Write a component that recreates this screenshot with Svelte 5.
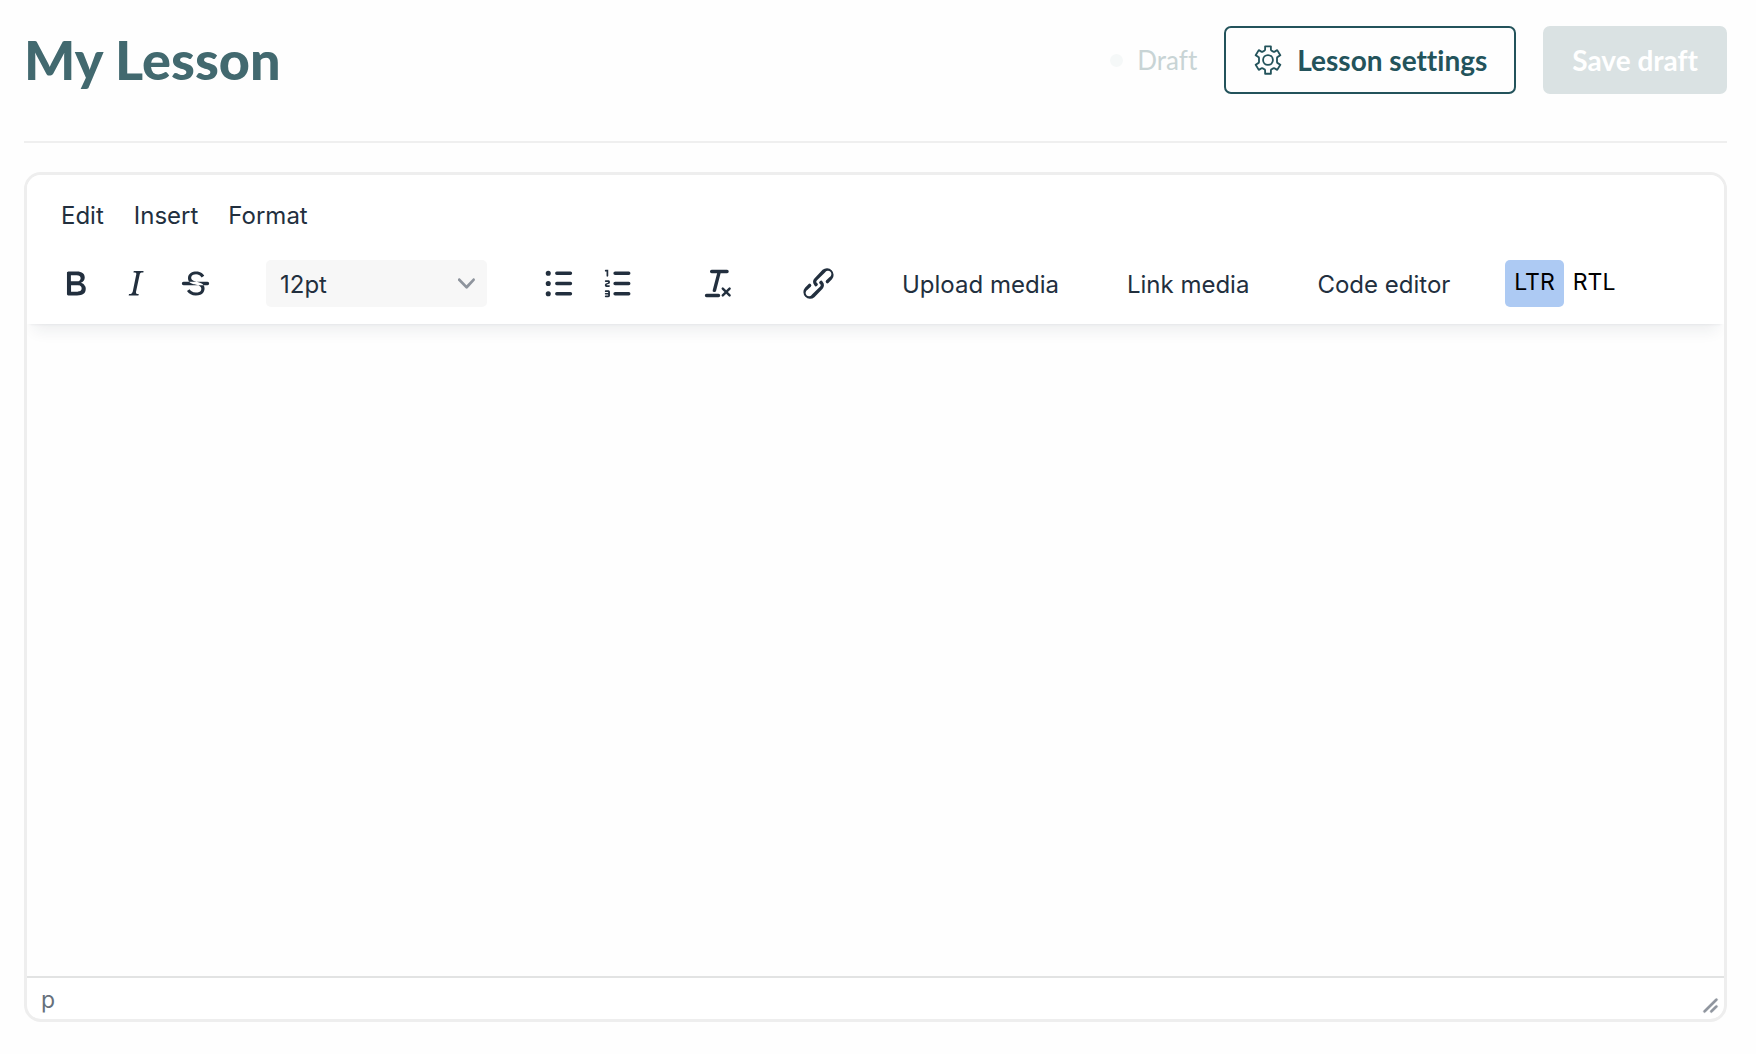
<script lang="ts">
	let fontSize = $state('12pt');
	let direction = $state('ltr');
	let content = $state('');

	const menus = ['Edit', 'Insert', 'Format'];
	const fontSizes = ['8pt', '10pt', '12pt', '14pt', '18pt', '24pt', '36pt'];

	const styleButtons = [
		{
			name: 'Bold',
			path: 'M7.8 19c-.3 0-.5 0-.6-.2l-.2-.5V5.7c0-.2 0-.4.2-.5l.6-.2h5c1.5 0 2.7.3 3.5 1 .7.6 1.1 1.4 1.1 2.5a3 3 0 0 1-.6 1.9c-.4.6-1 1-1.6 1.2.4.1.9.3 1.3.6s.8.7 1 1.2c.4.4.5 1 .5 1.6 0 1.3-.4 2.3-1.3 3-.8.7-2.1 1-3.8 1H7.8Zm5-8.3c.6 0 1.2-.1 1.6-.5.4-.3.6-.7.6-1.3 0-1.1-.8-1.7-2.3-1.7H9.3v3.5h3.4Zm.5 6c.7 0 1.3-.1 1.7-.4.4-.4.6-.9.6-1.5s-.2-1-.7-1.4c-.4-.3-1-.4-2-.4H9.4v3.8h4Z'
		},
		{
			name: 'Italic',
			path: 'm16.7 4.7-.1.9h-.3c-.6 0-1 0-1.4.3-.3.3-.4.6-.5 1.1l-2.1 9.8v.6c0 .5.4.8 1.4.8h.2l-.2.8H8l.2-.8h.2c1.1 0 1.8-.5 2-1.5l2-9.8.1-.5c0-.6-.4-.8-1.4-.8h-.3l.2-.9h5.8Z'
		},
		{
			name: 'Strikethrough',
			path: 'M15.6 8.5c-.5-.7-1-1.1-1.3-1.3-.6-.4-1.3-.6-2-.6-2.7 0-2.8 1.7-2.8 2.1 0 1.6 1.8 2 3.2 2.3 4.4.9 4.6 2.8 4.6 3.9 0 1.4-.7 4.1-5 4.1A6.2 6.2 0 0 1 7 16.4l1.5-1.1c.4.6 1.6 2 3.7 2 1.6 0 2.5-.4 3-1.2.4-.8.3-2-.8-2.6-.7-.4-1.6-.7-2.9-1-1-.2-3.9-.8-3.9-3.6C7.6 6 10.3 5 12.4 5c2.9 0 4.2 1.6 4.7 2.4l-1.5 1.1ZM5 11h14a1 1 0 0 1 0 2H5a1 1 0 0 1 0-2Z'
		}
	];

	const listButtons = [
		{
			name: 'Bullet list',
			path: 'M11 5h8a1 1 0 0 1 0 2h-8a1 1 0 0 1 0-2Zm0 6h8a1 1 0 0 1 0 2h-8a1 1 0 0 1 0-2Zm0 6h8a1 1 0 0 1 0 2h-8a1 1 0 0 1 0-2ZM6 4.5a1.5 1.5 0 1 1 0 3 1.5 1.5 0 0 1 0-3Zm0 6a1.5 1.5 0 1 1 0 3 1.5 1.5 0 0 1 0-3Zm0 6a1.5 1.5 0 1 1 0 3 1.5 1.5 0 0 1 0-3Z'
		},
		{
			name: 'Numbered list',
			path: 'M10 17h8a1 1 0 0 1 0 2h-8a1 1 0 0 1 0-2Zm0-6h8a1 1 0 0 1 0 2h-8a1 1 0 0 1 0-2Zm0-6h8a1 1 0 0 1 0 2h-8a1 1 0 1 1 0-2ZM6 4v3.5c0 .3-.2.5-.5.5a.5.5 0 0 1-.5-.5V5h-.5a.5.5 0 0 1 0-1H6Zm-1 8.8.2.2h1.3c.3 0 .5.2.5.5s-.2.5-.5.5H4.9a1 1 0 0 1-.9-1V13c0-.4.3-.8.6-1l1.2-.4.2-.3a.2.2 0 0 0-.2-.2H4.5a.5.5 0 0 1-.5-.5c0-.3.2-.5.5-.5h1.6c.5 0 .9.4.9 1v.1c0 .4-.3.8-.6 1l-1.2.4-.2.3ZM7 17v2c0 .6-.4 1-1 1H4.5a.5.5 0 0 1 0-1h1.2c.2 0 .3-.1.3-.3 0-.2-.1-.3-.3-.3H4.4a.4.4 0 1 1 0-.8h1.3c.2 0 .3-.1.3-.3 0-.2-.1-.3-.3-.3H4.5a.5.5 0 1 1 0-1H6c.6 0 1 .4 1 1Z'
		}
	];

	const clearButtons = [
		{
			name: 'Clear formatting',
			path: 'M13.2 6a1 1 0 0 1 0 .2l-2.6 10a1 1 0 0 1-1 .8h-.2a.8.8 0 0 1-.8-1l2.6-10H8a1 1 0 1 1 0-2h9a1 1 0 0 1 0 2h-3.8ZM5 18h7a1 1 0 0 1 0 2H5a1 1 0 0 1 0-2Zm13 1.5L16.5 18 15 19.5a.7.7 0 0 1-1-1l1.5-1.5-1.5-1.5a.7.7 0 0 1 1-1l1.5 1.5 1.5-1.5a.7.7 0 0 1 1 1L17.5 17l1.5 1.5a.7.7 0 0 1-1 1Z'
		}
	];

	const linkButtons = [
		{
			name: 'Insert link',
			path: 'M6.2 12.3a1 1 0 0 1 1.4 1.4l-2 2a2 2 0 1 0 2.6 2.8l4.8-4.8a1 1 0 0 0 0-1.4 1 1 0 1 1 1.4-1.3 2.9 2.9 0 0 1 0 4L9.6 20a3.9 3.9 0 0 1-5.5-5.5l2-2Zm11.6-.6a1 1 0 0 1-1.4-1.4l2-2a2 2 0 1 0-2.6-2.8L11 10.3a1 1 0 0 0 0 1.4A1 1 0 1 1 9.6 13a2.9 2.9 0 0 1 0-4L14.4 4a3.9 3.9 0 0 1 5.5 5.5l-2 2Z'
		}
	];

	const textButtons = ['Upload media', 'Link media', 'Code editor'];
</script>

{#snippet iconGroup(buttons: { name: string; path: string }[])}
	<div class="group">
		{#each buttons as button}
			<button class="icon-btn" type="button" aria-label={button.name} title={button.name}>
				<svg width="41" height="41" viewBox="0 0 24 24" fill="currentColor">
					<path fill-rule="evenodd" d={button.path} />
				</svg>
			</button>
		{/each}
	</div>
{/snippet}

<div class="page">
	<header class="header">
		<h1>My Lesson</h1>
		<div class="actions">
			<span class="status"><span class="dot"></span>Draft</span>
			<button class="btn btn-outline" type="button">
				<svg width="30" height="30" viewBox="0 0 28 28" fill="none" stroke="currentColor" stroke-width="1.7" stroke-linejoin="round">
					<path d="M11.3 1.2h5.4v3.1q0 .8.8 1.1l1.4.8q.7.4 1.3 0l2.4-1.4 2.9 4.8-2.4 1.5q-.7.4-.7 1.1v3.6q0 .7.7 1.1l2.4 1.5-2.9 4.8-2.4-1.4q-.6-.4-1.3 0l-1.4.8q-.8.3-.8 1.1v3.1h-5.4v-3.1q0-.8-.8-1.1l-1.4-.8q-.7-.4-1.3 0l-2.4 1.4-2.9-4.8 2.4-1.5q.7-.4.7-1.1v-3.6q0-.7-.7-1.1L2.5 9.6l2.9-4.8 2.4 1.4q.6.4 1.3 0l1.4-.8q.8-.3.8-1.1Z" />
					<circle cx="14" cy="14" r="4.6" />
				</svg>
				Lesson settings
			</button>
			<button class="btn btn-primary" type="button" disabled>Save draft</button>
		</div>
	</header>

	<main class="editor">
		<div class="editor-header">
			<nav class="menubar">
				{#each menus as menu}
					<button type="button">{menu}</button>
				{/each}
			</nav>

			<div class="toolbar">
				{@render iconGroup(styleButtons)}

				<div class="font-size">
					<select bind:value={fontSize} aria-label="Font size">
						{#each fontSizes as size}
							<option value={size}>{size}</option>
						{/each}
					</select>
					<svg width="17" height="17" viewBox="0 0 10 10" fill="currentColor">
						<path d="M8.7 2.2c.3-.3.8-.3 1 0 .4.4.4.9 0 1.2L5.7 7.8c-.3.3-.9.3-1.2 0L.2 3.4a.8.8 0 0 1 0-1.2c.3-.3.8-.3 1.1 0L5 6l3.7-3.8Z" />
					</svg>
				</div>

				{@render iconGroup(listButtons)}
				{@render iconGroup(clearButtons)}
				{@render iconGroup(linkButtons)}

				{#each textButtons as label}
					<button class="text-btn" type="button">{label}</button>
				{/each}

				<div class="direction">
					<button type="button" class:active={direction === 'ltr'} onclick={() => (direction = 'ltr')}>LTR</button>
					<button type="button" class:active={direction === 'rtl'} onclick={() => (direction = 'rtl')}>RTL</button>
				</div>
			</div>
		</div>

		<textarea bind:value={content} dir={direction} aria-label="Lesson content"></textarea>

		<footer class="statusbar">
			<span>p</span>
			<svg width="17" height="17" viewBox="0 0 10 10" fill="currentColor" stroke="currentColor" stroke-width=".2">
				<path d="M8.1 1.1A.5.5 0 1 1 9 2l-7 7A.5.5 0 1 1 1 8l7-7ZM8.1 5.1A.5.5 0 1 1 9 6l-3 3A.5.5 0 1 1 5 8l3-3Z" />
			</svg>
		</footer>
	</main>
</div>

<style>
	:global(body) {
		background: #fefefe;
	}

	.page {
		display: flex;
		flex-direction: column;
		box-sizing: border-box;
		min-height: 100vh;
		padding: 26px 29px 32px 24px;
		font-family: Inter, 'Liberation Sans', sans-serif;
		font-size: 24px;
		color: #222f3e;
	}

	button,
	select,
	textarea {
		margin: 0;
		border: 0;
		background: none;
		font: inherit;
		color: inherit;
	}

	svg {
		display: block;
		flex: none;
	}

	.header {
		display: flex;
		align-items: center;
		justify-content: space-between;
		padding-bottom: 47px;
		border-bottom: 2px solid #efefef;
		font-family: Lato, 'Open Sans', sans-serif;
		font-variant-ligatures: none;
	}

	h1 {
		margin: 0;
		font-size: 54px;
		line-height: 68px;
		font-weight: 900;
		color: #42696f;
	}

	.actions {
		display: flex;
		align-items: center;
		gap: 27px;
	}

	.status {
		display: flex;
		align-items: center;
		gap: 14px;
		font-size: 26px;
		color: #c8d4d5;
	}

	.dot {
		width: 13px;
		height: 13px;
		border-radius: 50%;
		background: #f5f8f8;
	}

	.btn {
		display: flex;
		align-items: center;
		gap: 14px;
		box-sizing: border-box;
		height: 68px;
		padding: 0 27px;
		border: 2px solid #23535b;
		border-radius: 7px;
		font-size: 28px;
		font-weight: 700;
		white-space: nowrap;
	}

	.btn-outline {
		color: #23535b;
	}

	.btn-primary {
		background: #dae2e3;
		border-color: #dae2e3;
		color: #fff;
	}

	.editor {
		display: flex;
		flex: 1;
		flex-direction: column;
		margin-top: 29px;
		border: 3px solid #eee;
		border-radius: 17px;
		overflow: hidden;
		background: #fff;
	}

	.editor-header {
		position: relative;
		padding: 17px 19px;
		background: #fff;
		box-shadow: 0 3px 3px -3px rgba(34, 47, 62, 0.1), 0 14px 14px -7px rgba(34, 47, 62, 0.07);
	}

	.menubar {
		display: flex;
	}

	.menubar button {
		height: 44px;
		padding: 2px 15px 0;
	}

	.toolbar {
		display: flex;
		flex-wrap: wrap;
		align-items: center;
		gap: 24px 42px;
		margin-top: 24px;
	}

	.group {
		display: flex;
		gap: 2px;
	}

	.icon-btn {
		display: flex;
		align-items: center;
		justify-content: center;
		width: 58px;
		height: 47px;
		padding: 0;
	}

	.font-size {
		position: relative;
		width: 221px;
	}

	.font-size select {
		display: block;
		width: 100%;
		height: 47px;
		padding: 2px 14px 0;
		border-radius: 5px;
		background: #f7f7f7;
		appearance: none;
	}

	.font-size svg {
		position: absolute;
		right: 12px;
		top: 15px;
		color: #8e949d;
		pointer-events: none;
	}

	.text-btn {
		height: 47px;
		padding: 2px 13px 0;
		white-space: nowrap;
	}

	.direction {
		display: flex;
	}

	.direction button {
		height: 47px;
		padding: 0 9px 3px;
		border-radius: 5px;
		font-size: 23px;
		color: #000;
	}

	.direction button.active {
		background: #adcaf3;
	}

	textarea {
		flex: 1;
		padding: 24px;
		outline: none;
		resize: none;
		background: #fefefe;
	}

	.statusbar {
		display: flex;
		align-items: center;
		justify-content: space-between;
		height: 41px;
		padding: 2px 5px 0 14px;
		box-sizing: content-box;
		height: 39px;
		border-top: 2px solid #e2e3e3;
		font-size: 23px;
		color: #66707c;
	}

	.statusbar svg {
		margin-top: 12px;
		color: #90969f;
	}
</style>
